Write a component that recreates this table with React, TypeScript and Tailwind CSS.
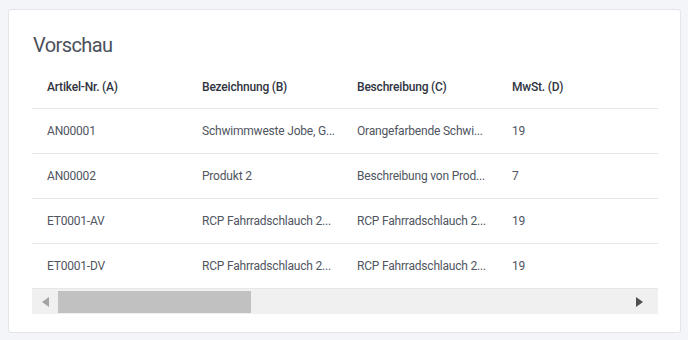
const columns = ["Artikel-Nr. (A)", "Bezeichnung (B)", "Beschreibung (C)", "MwSt. (D)"];

const rows = [
  ["AN00001", "Schwimmweste Jobe, G...", "Orangefarbende Schwi...", "19"],
  ["AN00002", "Produkt 2", "Beschreibung von Prod...", "7"],
  ["ET0001-AV", "RCP Fahrradschlauch 2...", "RCP Fahrradschlauch 2...", "19"],
  ["ET0001-DV", "RCP Fahrradschlauch 2...", "RCP Fahrradschlauch 2...", "19"],
];

export default function App() {
  return (
    <div
      className="w-[688px] h-[340px] bg-[#f4f5f8] pt-[9px] pl-[8px]"
      style={{ fontFamily: "Roboto, 'Noto Sans', sans-serif" }}
    >
      <div className="w-[673px] h-[324px] bg-white border border-[#e3e5ea] rounded-[3px] pl-[23px] pr-[22px] pt-[21px]">
        <h2 className="text-[20px] leading-[28px] tracking-[-0.6px] text-[#4b505c] pl-[1px]">Vorschau</h2>

        <div className="mt-[6px]">
          <div className="flex h-[44px] items-center border-b border-[#e6e7eb]">
            {columns.map((c) => (
              <div key={c} className="w-[155px] pl-[15px] text-[12px] tracking-[-0.2px] font-medium text-[#2f3441]">
                {c}
              </div>
            ))}
          </div>
          {rows.map((r) => (
            <div key={r[0]} className="flex h-[45px] items-center border-b border-[#e6e7eb] last:border-b-0">
              {r.map((v, i) => (
                <div key={i} className="w-[155px] pl-[15px] text-[12px] tracking-[-0.2px] text-[#50555f] whitespace-nowrap">
                  {v}
                </div>
              ))}
            </div>
          ))}

          <div className="flex h-[25px] items-center bg-[#f0f0f0]">
            <div className="w-[26px] flex justify-center">
              <svg width="7" height="10" viewBox="0 0 7 10">
                <path d="M7 0 L0 5 L7 10 Z" fill="#a3a3a3" />
              </svg>
            </div>
            <div className="w-[193px] h-[22px] bg-[#c1c1c1]" />
            <div className="flex-1" />
            <div className="w-[22px] flex justify-start">
              <svg width="7" height="10" viewBox="0 0 7 10">
                <path d="M0 0 L7 5 L0 10 Z" fill="#505050" />
              </svg>
            </div>
          </div>
        </div>
      </div>
    </div>
  );
}
